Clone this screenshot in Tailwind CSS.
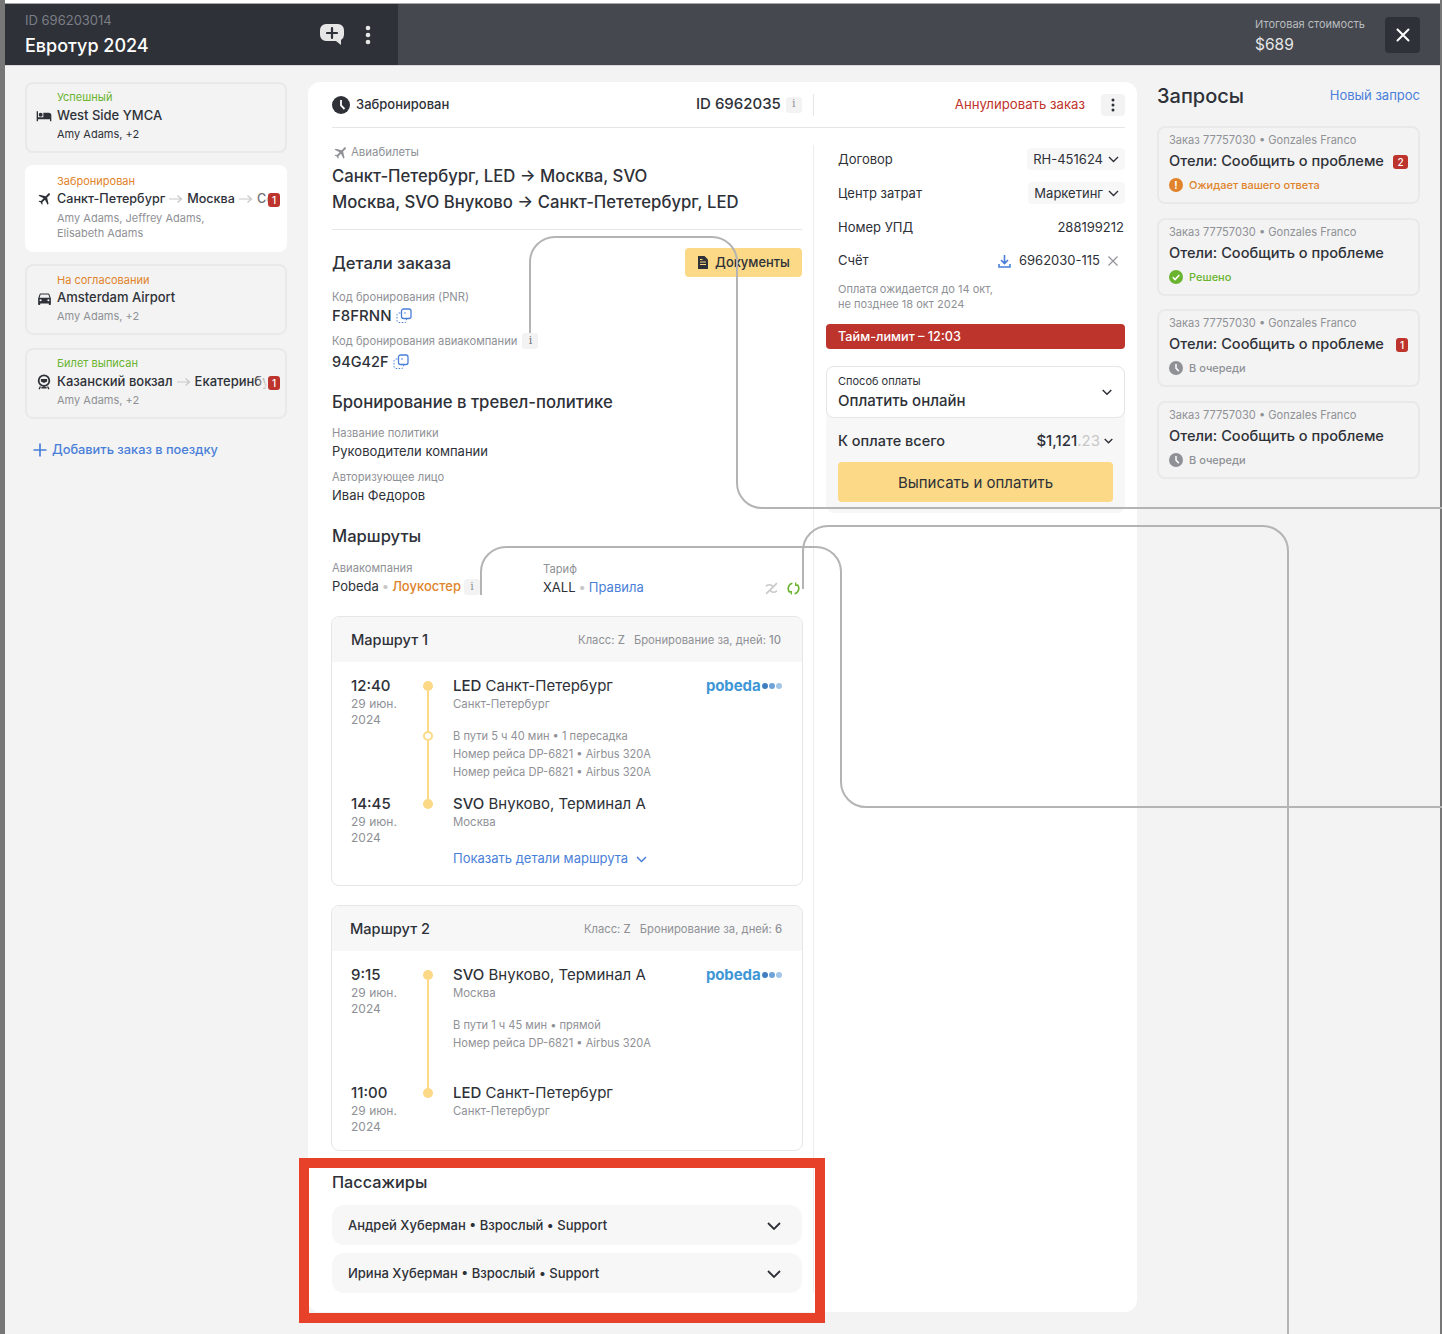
<!DOCTYPE html>
<html lang="ru">
<head>
    <meta charset="UTF-8">
    <meta name="viewport" content="width=device-width, initial-scale=1.0">
    <script src="https://cdn.jsdelivr.net/npm/@tailwindcss/browser@4"></script>
    <title>Евротур 2024</title>
</head>
<body class="bg-[#f3f3f3]">
<div class="relative flex w-[1442px] h-[1334px] overflow-hidden font-['Inter','Noto_Sans',sans-serif] text-[#2e3138]">
    <div class="w-[5px] shrink-0 bg-[#777777] "></div>

    <div class="w-[1435px] shrink-0 flex flex-col bg-[#f3f3f3]">
        <div class="h-[3px] bg-white"></div>

        <!-- Header -->
        <div class="h-[63px] flex border-t border-[#a8a8a8] border-b-[#d8d8d8] border-b bg-[#45484f]">
            <div class="w-[393px] flex items-center justify-between bg-[#2e3138] pl-5 pr-[27px]">
                <div class="pt-[1px]">
                    <div class="text-[13px] leading-[18px] text-[#7b7e85]">ID 696203014</div>
                    <div class="mt-[4px] text-[18px] leading-[26px] font-medium text-white">Евротур 2024</div>
                </div>
                <div class="flex items-center gap-[20px]">
                    <svg width="26" height="24" viewBox="0 0 26 24"><path d="M7 1h12a6 6 0 0 1 6 6v5a6 6 0 0 1-3 5v5l-5-4H7a6 6 0 0 1-6-6V7a6 6 0 0 1 6-6z" fill="#e6e6e6"/><path d="M13 5v10M8 10h10" stroke="#2e3138" stroke-width="2.2" stroke-linecap="round"/></svg>
                    <svg width="6" height="20" viewBox="0 0 6 20" fill="#e6e6e6"><circle cx="3" cy="3" r="2.3"/><circle cx="3" cy="10" r="2.3"/><circle cx="3" cy="17" r="2.3"/></svg>
                </div>
            </div>
            <div class="flex-1 flex items-center justify-end pr-[20px]">
                <div class="w-[130px] pt-[1px]">
                    <div class="text-[11px] leading-[16px] text-[#b9bbbf]">Итоговая стоимость</div>
                    <div class="mt-[3px] text-[15.5px] leading-[20px] text-[#e6e6e6]">$689</div>
                </div>
                <div class="flex h-[36px] w-[35px] items-center justify-center rounded-[4px] bg-[#2e3138]">
                    <svg width="14" height="14" viewBox="0 0 14 14"><path d="M1.500 1.500l11 11M12.500 1.500l-11 11" stroke="#fff" stroke-width="2" stroke-linecap="round"/></svg>
                </div>
            </div>
        </div>

        <div class="flex pl-5 pt-[16px]">
            <!-- Left column -->
            <div class="w-[262px] shrink-0">
                <div class="h-[71px] rounded-lg border-2 border-[#e9e9e9] pt-[5px] pl-[6px] pr-[5px]">
                    <div class="pl-[24px] text-[11px] leading-[16px] text-[#6ab42f]">Успешный</div>
                    <div class="flex items-center h-[20px] mt-[1px]">
                        <svg class="ml-[3px] mr-[5px] shrink-0" width="16" height="16" viewBox="0 0 24 24" fill="#2e3138"><path d="M19,7H11V14H3V5H1V20H3V17H21V20H23V11A4,4 0 0,0 19,7M7,13A3,3 0 0,0 10,10A3,3 0 0,0 7,7A3,3 0 0,0 4,10A3,3 0 0,0 7,13Z"/></svg>
                        <span class="text-[13px] font-medium">West Side YMCA</span>
                    </div>
                    <div class="pl-[24px] text-[11px] leading-[16px]">Amy Adams, +2</div>
                </div>

                <div class="relative mt-[12px] h-[87px] rounded-lg bg-white pt-[8px] pl-[8px] pr-[7px]">
                    <div class="pl-[24px] text-[11px] leading-[16px] text-[#e0832a]">Забронирован</div>
                    <div class="flex items-center h-[20px] whitespace-nowrap overflow-hidden w-[240px]">
                        <svg class="ml-[3px] mr-[5px] shrink-0" width="16" height="16" viewBox="0 0 24 24" fill="#2e3138"><path d="M20.56 3.91C21.15 4.500 21.15 5.45 20.56 6.03L16.67 9.92L18.79 19.11L17.38 20.53L13.500 13.1L9.600 17L9.96 19.47L8.89 20.53L7.13 17.35L3.94 15.58L5 14.500L7.500 14.87L11.37 11L3.94 7.09L5.36 5.68L14.55 7.800L18.44 3.91C19 3.33 20 3.33 20.56 3.91Z"/></svg>
                        <span class="text-[12.6px] font-medium">Санкт-Петербург</span>
                        <svg class="mx-[4px] shrink-0" width="14" height="10" viewBox="0 0 14 10" fill="none" stroke="#c8c8c8" stroke-width="1.2"><path d="M0 5h12M8.500 1.500L12.500 5L8.500 8.500"/></svg>
                        <span class="text-[12.6px] font-medium">Москва</span>
                        <svg class="mx-[4px] shrink-0" width="14" height="10" viewBox="0 0 14 10" fill="none" stroke="#c8c8c8" stroke-width="1.2"><path d="M0 5h12M8.500 1.500L12.500 5L8.500 8.500"/></svg>
                        <span class="text-[12.6px] font-medium text-[#6f7176]">Сочи</span>
                    </div>
                    <div class="absolute left-[240px] top-[27px] flex h-[16px] w-[15px] items-center justify-end bg-gradient-to-r from-white/0 to-white to-30%">
                        <span class="flex h-[14px] w-[12px] items-center justify-center rounded-[3px] bg-[#bd342d] text-[10px] font-medium text-white">1</span>
                    </div>
                    <div class="pl-[24px] pr-[30px] text-[11px] leading-[15px] mt-[2px] text-[#8f9196]">Amy Adams, Jeffrey Adams,<br>Elisabeth Adams</div>
                </div>

                <div class="mt-[12px] h-[71px] rounded-lg border-2 border-[#e9e9e9] pt-[6px] pl-[6px] pr-[5px]">
                    <div class="pl-[24px] text-[11px] leading-[16px] text-[#e0832a]">На согласовании</div>
                    <div class="flex items-center h-[20px]">
                        <svg class="ml-[3px] mr-[4px] shrink-0" width="17" height="17" viewBox="0 0 24 24" fill="#2e3138"><path d="M5,11L6.500,6.500H17.500L19,11M17.500,16A1.500,1.500 0 0,1 16,14.500A1.500,1.500 0 0,1 17.500,13A1.500,1.500 0 0,1 19,14.500A1.500,1.500 0 0,1 17.500,16M6.500,16A1.500,1.500 0 0,1 5,14.500A1.500,1.500 0 0,1 6.500,13A1.500,1.500 0 0,1 8,14.500A1.500,1.500 0 0,1 6.500,16M18.92,6C18.72,5.42 18.16,5 17.500,5H6.500C5.84,5 5.28,5.42 5.08,6L3,12V20A1,1 0 0,0 4,21H5A1,1 0 0,0 6,20V19H18V20A1,1 0 0,0 19,21H20A1,1 0 0,0 21,20V12L18.92,6Z"/></svg>
                        <span class="text-[13px] font-medium">Amsterdam Airport</span>
                    </div>
                    <div class="pl-[24px] text-[11px] leading-[16px] text-[#8f9196]">Amy Adams, +2</div>
                </div>

                <div class="relative mt-[13px] h-[71px] rounded-lg border-2 border-[#e9e9e9] pt-[5px] pl-[6px] pr-[5px]">
                    <div class="pl-[24px] text-[11px] leading-[16px] text-[#6ab42f]">Билет выписан</div>
                    <div class="flex items-center h-[20px] mt-[1px] whitespace-nowrap overflow-hidden w-[236px]">
                        <svg class="ml-[3px] mr-[5px] shrink-0" width="16" height="16" viewBox="0 0 18 18" fill="none"><circle cx="9" cy="7.500" r="6" stroke="#2e3138" stroke-width="2"/><path d="M5.500 5.500h7v3l-3.500 1.500l-3.500-1.500z" fill="#2e3138"/><path d="M5 14l-1.500 3M13 14l1.500 3M6 15.500h6" stroke="#2e3138" stroke-width="1.500"/></svg>
                        <span class="text-[13px] font-medium">Казанский вокзал</span>
                        <svg class="mx-[4px] shrink-0" width="14" height="10" viewBox="0 0 14 10" fill="none" stroke="#c8c8c8" stroke-width="1.2"><path d="M0 5h12M8.500 1.500L12.500 5L8.500 8.500"/></svg>
                        <span class="text-[13px] font-medium">Екатеринбург</span>
                    </div>
                    <div class="absolute left-[228px] top-[25px] flex h-[16px] w-[25px] items-center justify-end bg-gradient-to-r from-[#f3f3f3]/0 to-[#f3f3f3] to-50%">
                        <span class="flex h-[14px] w-[12px] items-center justify-center rounded-[3px] bg-[#bd342d] text-[10px] font-medium text-white">1</span>
                    </div>
                    <div class="pl-[24px] text-[11px] leading-[16px] text-[#8f9196]">Amy Adams, +2</div>
                </div>

                <div class="mt-[22px] ml-[8px] flex items-center h-[18px] text-[12.8px] font-medium text-[#4a7fd9]">
                    <svg class="mr-[5px]" width="14" height="14" viewBox="0 0 14 14"><path d="M7 .5v13M.5 7h13" stroke="#4a7fd9" stroke-width="1.700"/></svg>
                    Добавить заказ в поездку
                </div>
            </div>

            <!-- Center card -->
            <div class="ml-[21px] w-[829px] h-[1230px] shrink-0 flex flex-col rounded-xl bg-white pl-[24px] pr-[12px]">
                <div class="h-[46px] shrink-0 flex items-center border-b border-[#e6e6e6]">
                    <svg width="18" height="18" viewBox="0 0 18 18"><circle cx="9" cy="9" r="9" fill="#2e3138"/><path d="M9 4v5.500l3.500 3.500" stroke="#fff" stroke-width="1.800" fill="none"/></svg>
                    <span class="ml-[6px] text-[13px] font-medium">Забронирован</span>
                    <span class="ml-auto text-[15px] font-medium">ID 6962035</span>
                    <span class="ml-[5px] flex h-[16px] w-[16px] items-center justify-center rounded-[3px] bg-[#f3f3f3] font-['DejaVu_Serif',serif] text-[11px] text-[#8f9196]">i</span>
                    <div class="ml-[11px] h-[22px] w-px bg-[#e6e6e6]"></div>
                    <span class="ml-[141px] text-[13.2px] text-[#c0322c]">Аннулировать заказ</span>
                    <div class="ml-[16px] flex h-[22px] w-[24px] items-center justify-center rounded-[4px] bg-[#f3f3f3]">
                        <svg width="4" height="14" viewBox="0 0 4 14" fill="#2e3138"><circle cx="2" cy="2" r="1.500"/><circle cx="2" cy="7" r="1.500"/><circle cx="2" cy="12" r="1.500"/></svg>
                    </div>
                </div>

                <div class="flex flex-1">
                    <!-- Order details -->
                    <div class="w-[470px] shrink-0">
                        <div class="mt-[18px] flex items-center h-[14px] text-[11.4px] text-[#8f9196]">
                            <svg class="mr-[3px]" width="16" height="16" viewBox="0 0 24 24" fill="#8f9196"><path d="M20.56 3.91C21.15 4.500 21.15 5.45 20.56 6.03L16.67 9.92L18.79 19.11L17.38 20.53L13.500 13.1L9.600 17L9.96 19.47L8.89 20.53L7.13 17.35L3.94 15.58L5 14.500L7.500 14.87L11.37 11L3.94 7.09L5.36 5.68L14.55 7.800L18.44 3.91C19 3.33 20 3.33 20.56 3.91Z"/></svg>
                            Авиабилеты
                        </div>
                        <div class="mt-[3px] pb-[14px] border-b border-[#e6e6e6] text-[16.7px] leading-[26px] font-medium">
                            Санкт-Петербург, LED → Москва, SVO<br>Москва, SVO Внуково → Санкт-Пететербург, LED
                        </div>

                        <div class="mt-[18px] flex items-center justify-between h-[29px]">
                            <span class="pt-[2px] text-[16.6px] font-medium">Детали заказа</span>
                            <span class="flex h-[29px] w-[117px] items-center justify-center rounded-[4px] bg-[#fbd986] text-[12.9px] font-medium">
                                <svg class="mr-[6px]" width="12" height="13" viewBox="0 0 12 13"><path d="M1 0h6.500L11 3.500V13H1z" fill="#2e3138"/><path d="M3 6h6M3 8.500h6M3 3.500h2.500" stroke="#fbd986" stroke-width="1.100"/></svg>
                                Документы
                            </span>
                        </div>

                        <div class="mt-[12px] text-[11.2px] leading-[16px] text-[#8f9196]">Код бронирования (PNR)</div>
                        <div class="mt-[1px] flex items-center h-[20px] text-[15px] font-medium">F8FRNN
                            <svg class="ml-[4px]" width="16" height="16" viewBox="0 0 16 16" fill="none" stroke="#4a7fd9"><rect x="1" y="5" width="9.500" height="9.500" rx="2" stroke-dasharray="1.500 1.500"/><rect x="5.500" y="1" width="9.500" height="9.500" rx="2" fill="#fff" stroke-width="1.300"/><circle cx="9" cy="5" r=".8" fill="#4a7fd9" stroke="none"/></svg>
                        </div>
                        <div class="mt-[7px] flex items-center h-[16px] text-[11.2px] text-[#8f9196]">Код бронирования авиакомпании
                            <span class="ml-[5px] flex h-[16px] w-[16px] items-center justify-center rounded-[3px] bg-[#f3f3f3] font-['DejaVu_Serif',serif] text-[11px] text-[#6f7176]">i</span>
                        </div>
                        <div class="mt-[3px] flex items-center h-[20px] text-[14.5px] font-medium">94G42F
                            <svg class="ml-[4px]" width="16" height="16" viewBox="0 0 16 16" fill="none" stroke="#4a7fd9"><rect x="1" y="5" width="9.500" height="9.500" rx="2" stroke-dasharray="1.500 1.500"/><rect x="5.500" y="1" width="9.500" height="9.500" rx="2" fill="#fff" stroke-width="1.300"/><circle cx="9" cy="5" r=".8" fill="#4a7fd9" stroke="none"/></svg>
                        </div>

                        <div class="mt-[18px] text-[16.7px] leading-[24px] font-medium">Бронирование в тревел-политике</div>
                        <div class="mt-[11px] text-[11.2px] leading-[16px] text-[#8f9196]">Название политики</div>
                        <div class="mt-[1px] text-[13px] leading-[18px]">Руководители компании</div>
                        <div class="mt-[9px] text-[11.2px] leading-[16px] text-[#8f9196]">Авторизующее лицо</div>
                        <div class="mt-[1px] text-[13px] leading-[18px]">Иван Федоров</div>

                        <div class="mt-[20px] text-[16.6px] leading-[24px] font-medium">Маршруты</div>
                        <div class="mt-[12px] flex h-[35px]">
                            <div class="w-[211px]">
                                <div class="text-[11.2px] leading-[16px] text-[#8f9196]">Авиакомпания</div>
                                <div class="mt-[2px] flex items-center h-[18px] text-[13px]">Pobeda
                                    <span class="mx-[3px] text-[#c8c8c8]">•</span>
                                    <span class="font-medium text-[#e0832a]">Лоукостер</span>
                                    <span class="ml-[3px] flex h-[16px] w-[16px] items-center justify-center rounded-[3px] bg-[#f3f3f3] font-['DejaVu_Serif',serif] text-[11px] text-[#8f9196]">i</span>
                                </div>
                            </div>
                            <div class="flex-1 pt-[1px]">
                                <div class="text-[11.2px] leading-[16px] text-[#8f9196]">Тариф</div>
                                <div class="mt-[2px] flex items-center h-[18px] text-[13px]">XALL
                                    <span class="mx-[3px] text-[#c8c8c8]">•</span>
                                    <span class="text-[#4a7fd9]">Правила</span>
                                    <svg class="ml-auto" width="13" height="13" viewBox="0 0 12 12" fill="none" stroke="#c8c8c8" stroke-width="1.500"><path d="M1 11L11 1M1 4c1-2 5-2 6 0M5 8c1 2 5 2 6 0"/></svg>
                                    <svg class="ml-[9px] mr-[2px]" width="13" height="13" viewBox="0 0 12 12" fill="none" stroke="#6ab42f" stroke-width="1.500"><path d="M5 1.200A5 5 0 0 0 2.500 9.500M7 10.800A5 5 0 0 0 9.500 2.500"/><path d="M8 .5v2.500h2.500M4 11.500V9H1.500" stroke-width="1.200"/></svg>
                                </div>
                            </div>
                        </div>

                        <!-- Route 1 -->
                        <div class="mt-[21px] -mx-px h-[270px] overflow-hidden rounded-lg border border-[#e6e6e6]">
                            <div class="flex items-center h-[45px] bg-[#f7f7f7] pl-[19px] pr-[21px] pt-[2px]">
                                <span class="text-[14.6px] font-medium">Маршрут 1</span>
                                <span class="ml-auto text-[11.25px] text-[#8f9196]">Класс: <span class="font-medium">Z</span><span class="ml-[9px]">Бронирование за, дней: <span class="font-medium">10</span></span></span>
                            </div>
                            <div class="flex pt-[15px] pl-[19px] pr-[20px]">
                                <div class="w-[71px] shrink-0">
                                    <div class="h-[118px]">
                                        <div class="text-[15px] leading-[18px] font-medium">12:40</div>
                                        <div class="mt-[1px] text-[12px] leading-[16px] text-[#8f9196]">29 июн.<br>2024</div>
                                    </div>
                                    <div class="text-[15px] leading-[18px] font-medium">14:45</div>
                                    <div class="mt-[1px] text-[12px] leading-[16px] text-[#8f9196]">29 июн.<br>2024</div>
                                </div>
                                <div class="mt-[4px] w-[10px] ml-[1px] flex flex-col items-center shrink-0">
                                    <div class="h-[10px] w-[10px] rounded-full bg-[#fbd986]"></div>
                                    <div class="h-[40px] w-[2px] bg-[#fbd986]"></div>
                                    <div class="h-[10px] w-[10px] rounded-full border-2 border-[#fbd986]"></div>
                                    <div class="h-[58px] w-[2px] bg-[#fbd986]"></div>
                                    <div class="h-[10px] w-[10px] rounded-full bg-[#fbd986]"></div>
                                </div>
                                <div class="ml-[20px] flex-1 relative">
                                    <div class="text-[15px] leading-[18px]"><span class="font-medium">LED</span> Санкт-Петербург</div>
                                    <div class="mt-[1px] text-[11.4px] leading-[16px] text-[#8f9196]">Санкт-Петербург</div>
                                    <div class="mt-[15px] text-[11.1px] leading-[18px] text-[#8f9196]">В пути 5 ч 40 мин • 1 пересадка<br>Номер рейса DP-6821 • Airbus 320A<br>Номер рейса DP-6821 • Airbus 320A</div>
                                    <div class="mt-[14px] text-[15px] leading-[18px]"><span class="font-medium">SVO</span> Внуково, Терминал А</div>
                                    <div class="mt-[1px] text-[11.4px] leading-[16px] text-[#8f9196]">Москва</div>
                                    <div class="mt-[20px] flex items-center h-[18px] text-[13px] text-[#4a7fd9]">Показать детали маршрута
                                        <svg class="ml-[8px]" width="11" height="7" viewBox="0 0 11 7" fill="none" stroke="#4a7fd9" stroke-width="1.500"><path d="M1 1l4.500 4.500L10 1"/></svg>
                                    </div>
                                    <div class="absolute right-0 top-0 flex items-center h-[18px]">
                                        <span class="text-[15px] font-bold tracking-[-0.1px] text-[#3f97d6]">pobeda</span>
                                        <span class="ml-[1.5px] h-[6px] w-[6px] rounded-full bg-[#3f7fc0]"></span>
                                        <span class="ml-px h-[6px] w-[6px] rounded-full bg-[#6fa3d8]"></span>
                                        <span class="ml-px h-[6px] w-[6px] rounded-full bg-[#a3c5e8]"></span>
                                    </div>
                                </div>
                            </div>
                        </div>

                        <!-- Route 2 -->
                        <div class="mt-[19px] -mx-px h-[246px] overflow-hidden rounded-lg border border-[#e6e6e6]">
                            <div class="flex items-center h-[45px] bg-[#f7f7f7] pl-[18px] pr-[20px] pt-[2px]">
                                <span class="text-[14.6px] font-medium">Маршрут 2</span>
                                <span class="ml-auto text-[11.25px] text-[#8f9196]">Класс: <span class="font-medium">Z</span><span class="ml-[9px]">Бронирование за, дней: <span class="font-medium">6</span></span></span>
                            </div>
                            <div class="flex pt-[15px] pl-[19px] pr-[20px]">
                                <div class="w-[71px] shrink-0">
                                    <div class="h-[118px]">
                                        <div class="text-[15px] leading-[18px] font-medium">9:15</div>
                                        <div class="mt-[1px] text-[12px] leading-[16px] text-[#8f9196]">29 июн.<br>2024</div>
                                    </div>
                                    <div class="text-[15px] leading-[18px] font-medium">11:00</div>
                                    <div class="mt-[1px] text-[12px] leading-[16px] text-[#8f9196]">29 июн.<br>2024</div>
                                </div>
                                <div class="mt-[4px] w-[10px] ml-[1px] flex flex-col items-center shrink-0">
                                    <div class="h-[10px] w-[10px] rounded-full bg-[#fbd986]"></div>
                                    <div class="h-[108px] w-[2px] bg-[#fbd986]"></div>
                                    <div class="h-[10px] w-[10px] rounded-full bg-[#fbd986]"></div>
                                </div>
                                <div class="ml-[20px] flex-1 relative">
                                    <div class="text-[15px] leading-[18px]"><span class="font-medium">SVO</span> Внуково, Терминал А</div>
                                    <div class="mt-[1px] text-[11.4px] leading-[16px] text-[#8f9196]">Москва</div>
                                    <div class="mt-[15px] text-[11.1px] leading-[18px] text-[#8f9196]">В пути 1 ч 45 мин • прямой<br>Номер рейса DP-6821 • Airbus 320A</div>
                                    <div class="mt-[32px] text-[15px] leading-[18px]"><span class="font-medium">LED</span> Санкт-Петербург</div>
                                    <div class="mt-[1px] text-[11.4px] leading-[16px] text-[#8f9196]">Санкт-Петербург</div>
                                    <div class="absolute right-0 top-0 flex items-center h-[18px]">
                                        <span class="text-[15px] font-bold tracking-[-0.1px] text-[#3f97d6]">pobeda</span>
                                        <span class="ml-[1.5px] h-[6px] w-[6px] rounded-full bg-[#3f7fc0]"></span>
                                        <span class="ml-px h-[6px] w-[6px] rounded-full bg-[#6fa3d8]"></span>
                                        <span class="ml-px h-[6px] w-[6px] rounded-full bg-[#a3c5e8]"></span>
                                    </div>
                                </div>
                            </div>
                        </div>

                        <!-- Passengers -->
                        <div class="mt-[19px] text-[16.3px] leading-[24px] font-medium">Пассажиры</div>
                        <div class="mt-[11px] flex items-center justify-between h-[40px] rounded-xl bg-[#f7f7f7] pl-[16px] pr-[21px] pt-[2px] text-[13px] font-medium">
                            Андрей Хуберман • Взрослый • Support
                            <svg width="14" height="8" viewBox="0 0 14 8" fill="none" stroke="#2e3138" stroke-width="1.800"><path d="M1 1l6 6 6-6"/></svg>
                        </div>
                        <div class="mt-[8px] flex items-center justify-between h-[40px] rounded-xl bg-[#f7f7f7] pl-[16px] pr-[21px] pt-[2px] text-[13px] font-medium">
                            Ирина Хуберман • Взрослый • Support
                            <svg width="14" height="8" viewBox="0 0 14 8" fill="none" stroke="#2e3138" stroke-width="1.800"><path d="M1 1l6 6 6-6"/></svg>
                        </div>
                    </div>

                    <!-- Payment column -->
                    <div class="ml-[11px] mt-[17px] mb-[19px] flex-1 border-l border-[#ececec] pl-[12px]">
                        <div class="mt-[3px] flex items-center justify-between h-[22px] pl-[12px] text-[13px]"><span class="pt-[2px]">Договор</span>
                            <span class="flex h-[22px] items-center rounded-[4px] bg-[#f7f7f7] pl-[6px] pr-[6px] pt-[2px]">RH-451624
                                <svg class="ml-[5px] -mt-[2px]" width="11" height="7" viewBox="0 0 11 7" fill="none" stroke="#2e3138" stroke-width="1.400"><path d="M1 1l4.500 4.500L10 1"/></svg>
                            </span>
                        </div>
                        <div class="mt-[12px] flex items-center justify-between h-[22px] pl-[12px] text-[13px]"><span class="pt-[2px]">Центр затрат</span>
                            <span class="flex h-[22px] items-center rounded-[4px] bg-[#f7f7f7] pl-[6px] pr-[6px] pt-[2px]">Маркетинг
                                <svg class="ml-[5px] -mt-[2px]" width="11" height="7" viewBox="0 0 11 7" fill="none" stroke="#2e3138" stroke-width="1.400"><path d="M1 1l4.500 4.500L10 1"/></svg>
                            </span>
                        </div>
                        <div class="mt-[12px] flex items-center justify-between h-[22px] pl-[12px] pr-px pt-[2px] text-[13px]">Номер УПД<span>288199212</span></div>
                        <div class="mt-[11px] flex items-center h-[22px] pl-[12px] pt-[2px] text-[13px]">Счёт
                            <svg class="ml-auto" width="13" height="13" viewBox="0 0 13 13" fill="none" stroke="#4a7fd9" stroke-width="1.600"><path d="M6.500 0v8M3 5l3.500 3.500L10 5M1 9v3h11V9"/></svg>
                            <span class="ml-[8px]">6962030-115</span>
                            <svg class="ml-[8px] mr-[7px]" width="10" height="10" viewBox="0 0 10 10" stroke="#8f9196" stroke-width="1.100"><path d="M.5.500l9 9M9.500.500l-9 9"/></svg>
                        </div>
                        <div class="mt-[11px] pl-[12px] text-[11px] leading-[15px] text-[#8f9196]">Оплата ожидается до 14 окт,<br>не позднее 18 окт 2024</div>
                        <div class="mt-[12px] flex items-center h-[25px] rounded-[4px] bg-[#bd342d] pl-[12px] text-[12.7px] font-medium text-white">Тайм-лимит – 12:03</div>

                        <div class="mt-[17px] h-[147px] rounded-lg bg-[#f7f7f7]">
                            <div class="h-[52px] flex items-center justify-between rounded-lg border border-[#e6e6e6] bg-white pl-[11px] pr-[12px]">
                                <div>
                                    <div class="text-[11px] leading-[14px]">Способ оплаты</div>
                                    <div class="mt-[3px] text-[15px] leading-[20px] font-medium">Оплатить онлайн</div>
                                </div>
                                <svg width="10" height="7" viewBox="0 0 10 7" fill="none" stroke="#2e3138" stroke-width="1.500"><path d="M.7 1l4.300 4.300L9.300 1"/></svg>
                            </div>
                            <div class="mt-[13px] flex items-center h-[20px] pl-[12px] pr-[12px]">
                                <span class="text-[14.5px] font-medium">К оплате всего</span>
                                <span class="ml-auto text-[15px] font-medium">$1,121<span class="text-[#c8c8c8] font-normal">.23</span></span>
                                <svg class="ml-[4px]" width="9" height="6" viewBox="0 0 9 6" fill="none" stroke="#2e3138" stroke-width="1.400"><path d="M.7 1l3.800 3.800L8.300 1"/></svg>
                            </div>
                            <div class="mt-[11px] mx-[12px] flex h-[40px] items-center justify-center rounded-[4px] bg-[#fbd986] pt-[2px] text-[15px]">Выписать и оплатить</div>
                        </div>
                    </div>
                </div>
            </div>

            <!-- Requests -->
            <div class="ml-[20px] w-[263px] shrink-0">
                <div class="flex items-center justify-between h-[30px]">
                    <span class="-mt-[2px] text-[20px] font-medium">Запросы</span>
                    <span class="text-[13px] text-[#4a7fd9] -mt-[2px]">Новый запрос</span>
                </div>
                <div class="mt-[14px] h-[78px] rounded-lg border-2 border-[#e9e9e9] pl-[10px] pr-[10px] pt-[4px]">
                    <div class="text-[11.1px] leading-[16px] text-[#8f9196]">Заказ 77757030 • Gonzales Franco</div>
                    <div class="mt-[4px] flex items-center justify-between h-[20px] text-[14.6px] font-medium">Отели: Сообщить о проблеме
                        <span class="flex h-[14px] w-[15px] items-center justify-center rounded-[3px] bg-[#bd342d] text-[10px] text-white">2</span>
                    </div>
                    <div class="mt-[4px] flex items-center h-[18px] text-[11px] font-medium text-[#e0832a]">
                        <span class="mr-[6px] flex h-[14px] w-[14px] items-center justify-center rounded-full bg-[#e0832a] text-[10px] font-bold text-white">!</span>Ожидает вашего ответа
                    </div>
                </div>
                <div class="mt-[14px] h-[78px] rounded-lg border-2 border-[#e9e9e9] pl-[10px] pr-[10px] pt-[4px]">
                    <div class="text-[11.1px] leading-[16px] text-[#8f9196]">Заказ 77757030 • Gonzales Franco</div>
                    <div class="mt-[4px] flex items-center h-[20px] text-[14.6px] font-medium">Отели: Сообщить о проблеме</div>
                    <div class="mt-[4px] flex items-center h-[18px] text-[11px] font-medium text-[#6ab42f]">
                        <svg class="mr-[6px]" width="14" height="14" viewBox="0 0 14 14"><circle cx="7" cy="7" r="7" fill="#6ab42f"/><path d="M3.800 7.200l2.300 2.300 4.200-4.500" stroke="#fff" stroke-width="1.600" fill="none"/></svg>Решено
                    </div>
                </div>
                <div class="mt-[13px] h-[78px] rounded-lg border-2 border-[#e9e9e9] pl-[10px] pr-[10px] pt-[4px]">
                    <div class="text-[11.1px] leading-[16px] text-[#8f9196]">Заказ 77757030 • Gonzales Franco</div>
                    <div class="mt-[4px] flex items-center justify-between h-[20px] text-[14.6px] font-medium">Отели: Сообщить о проблеме
                        <span class="flex h-[14px] w-[12px] items-center justify-center rounded-[3px] bg-[#bd342d] text-[10px] text-white">1</span>
                    </div>
                    <div class="mt-[4px] flex items-center h-[18px] text-[11px] font-medium text-[#8f9196]">
                        <svg class="mr-[6px]" width="14" height="14" viewBox="0 0 14 14"><circle cx="7" cy="7" r="7" fill="#8f9196"/><path d="M7 3v4.300l2.800 2.800" stroke="#fff" stroke-width="1.500" fill="none"/></svg>В очереди
                    </div>
                </div>
                <div class="mt-[14px] h-[78px] rounded-lg border-2 border-[#e9e9e9] pl-[10px] pr-[10px] pt-[4px]">
                    <div class="text-[11.1px] leading-[16px] text-[#8f9196]">Заказ 77757030 • Gonzales Franco</div>
                    <div class="mt-[4px] flex items-center h-[20px] text-[14.6px] font-medium">Отели: Сообщить о проблеме</div>
                    <div class="mt-[4px] flex items-center h-[18px] text-[11px] font-medium text-[#8f9196]">
                        <svg class="mr-[6px]" width="14" height="14" viewBox="0 0 14 14"><circle cx="7" cy="7" r="7" fill="#8f9196"/><path d="M7 3v4.300l2.800 2.800" stroke="#fff" stroke-width="1.500" fill="none"/></svg>В очереди
                    </div>
                </div>
            </div>
        </div>
    </div>

    <div class="w-[2px] shrink-0 bg-[#777777]"></div>

    <!-- Annotation connectors drawn over the screenshot -->
    <svg class="absolute left-0 top-0 pointer-events-none" width="1442" height="1334" viewBox="0 0 1442 1334" fill="none" stroke="#b4b4b4" stroke-width="2">
        <path d="M530 333V262a25 25 0 0 1 25-25H712a25 25 0 0 1 25 25V483a25 25 0 0 0 25 25H1442"/>
        <path d="M481 595V572a25 25 0 0 1 25-25H816a25 25 0 0 1 25 25V782a25 25 0 0 0 25 25H1442"/>
        <path d="M803 589V551a25 25 0 0 1 25-25H1263a25 25 0 0 1 25 25V1334"/>
    </svg>

    <!-- Red highlight frame -->
    <div class="absolute left-[299px] top-[1158px] h-[165px] w-[526px] border-[10px] border-[#e8412a] pointer-events-none"></div>
</div>
</body>
</html>
